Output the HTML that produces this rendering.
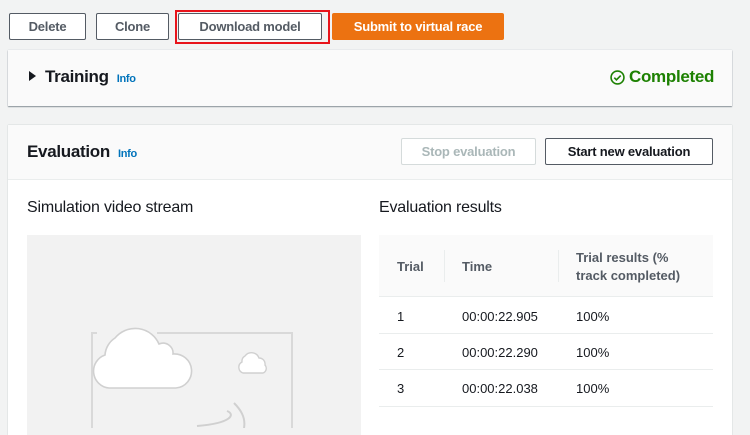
<!DOCTYPE html>
<html><head><meta charset="utf-8"><style>
*{box-sizing:border-box;margin:0;padding:0}
body{width:750px;height:428px;overflow:hidden;background:#f2f3f3;font-family:"Liberation Sans",sans-serif;color:#16191f;position:relative}
.a{position:absolute}
.btn{position:absolute;height:27px;border:1px solid #545b64;background:#fff;border-radius:2px;font-size:13px;font-weight:bold;color:#545b64;display:flex;align-items:center;justify-content:center;letter-spacing:-0.2px}
.info{color:#0073bb;font-size:11px;font-weight:bold;margin-left:8px}
</style></head><body>
<div class="btn" style="left:9px;top:13px;width:77px">Delete</div>
<div class="btn" style="left:96px;top:13px;width:73px">Clone</div>
<div class="a" style="left:175px;top:10px;width:155px;height:34px;border:2px solid #e8141b"></div>
<div class="btn" style="left:178px;top:13px;width:144px">Download model</div>
<div class="btn" style="left:332px;top:13px;width:172px;background:#ec7211;border-color:#ec7211;color:#fff">Submit to virtual race</div>

<div class="a" style="left:8px;top:50px;width:724px;height:56px;background:#fafafa;box-shadow:0 1px 1px #8a9399,0 0 1px #c4c8cc"></div>
<div class="a" style="left:29px;top:71px;width:0;height:0;border-left:7px solid #16191f;border-top:5px solid transparent;border-bottom:5px solid transparent"></div>
<div class="a" style="left:45px;top:67px;font-size:17px;font-weight:bold;letter-spacing:-0.3px">Training<span class="info">Info</span></div>
<div class="a" style="left:610px;top:67px;font-size:17px;font-weight:bold;color:#1d8102;letter-spacing:-0.3px;display:flex;align-items:center">
<svg width="15" height="15" viewBox="0 0 14 14" style="margin-right:4px"><circle cx="7" cy="7" r="6" fill="none" stroke="#1d8102" stroke-width="1.5"/><path d="M4 7.2l2 2 4-4" fill="none" stroke="#1d8102" stroke-width="1.5"/></svg>Completed</div>

<div class="a" style="left:8px;top:125px;width:724px;height:310px;background:#fff;box-shadow:0 0 1px #aab7b8"></div>
<div class="a" style="left:8px;top:125px;width:724px;height:55px;background:#fafafa;border-bottom:1px solid #eaeded"></div>
<div class="a" style="left:27px;top:142px;font-size:17px;font-weight:bold;letter-spacing:-0.3px">Evaluation<span class="info">Info</span></div>
<div class="btn" style="left:401px;top:138px;width:135px;border-color:#d5dbdb;color:#aab7b8">Stop evaluation</div>
<div class="btn" style="left:545px;top:138px;width:168px;color:#16191f;border-color:#545b64">Start new evaluation</div>

<div class="a" style="left:27px;top:199px;font-size:16px;letter-spacing:-0.2px">Simulation video stream</div>
<div class="a" style="left:379px;top:199px;font-size:16px;letter-spacing:-0.2px">Evaluation results</div>
<div class="a" style="left:27px;top:235px;width:334px;height:200px;background:#f2f2f2"></div>
<svg class="a" style="left:27px;top:235px" width="334" height="193" viewBox="0 0 334 193">
<path d="M70 98H65V200M130 98H265V200" fill="none" stroke="#d9d9d9" stroke-width="2"/>
<path d="M82 153a17 17 0 0 1 -4-33a22 22 0 0 1 10-17a26 26 0 0 1 44 6a10 10 0 0 1 14 10a17 17 0 0 1 3 34z" fill="#fff" stroke="#d0d0d0" stroke-width="1.6"/>
<path d="M216 138a6 6 0 0 1 -1-11a6 6 0 0 1 3-6a8 8 0 0 1 14 2a6 6 0 0 1 6 7a5 5 0 0 1-2 8z" fill="#fff" stroke="#d0d0d0" stroke-width="1.4"/>
<path d="M207 168c6 6 12 14 10 25M200 176c8 3 6 12 -30 15" fill="none" stroke="#d0d0d0" stroke-width="2"/>
</svg>
<div class="a" style="left:379px;top:235px;width:334px;height:62px;background:#fafafa;border-bottom:1px solid #eaeded"></div>
<div class="a" style="left:444px;top:250px;width:1px;height:32px;background:#eaeded"></div>
<div class="a" style="left:558px;top:250px;width:1px;height:32px;background:#eaeded"></div>
<div class="a" style="left:397px;top:259px;font-size:13px;font-weight:bold;color:#545b64">Trial</div>
<div class="a" style="left:462px;top:259px;font-size:13px;font-weight:bold;color:#545b64">Time</div>
<div class="a" style="left:576px;top:249px;font-size:13px;font-weight:bold;color:#545b64;line-height:18px">Trial results (%<br>track completed)</div>
<div class="a" style="left:379px;top:333px;width:334px;height:1px;background:#eaeded"></div>
<div class="a" style="left:379px;top:369px;width:334px;height:1px;background:#eaeded"></div>
<div class="a" style="left:379px;top:406px;width:334px;height:1px;background:#eaeded"></div>
<div class="a" style="left:397px;top:309px;font-size:13px">1</div><div class="a" style="left:462px;top:309px;font-size:13px">00:00:22.905</div><div class="a" style="left:576px;top:309px;font-size:13px">100%</div>
<div class="a" style="left:397px;top:345px;font-size:13px">2</div><div class="a" style="left:462px;top:345px;font-size:13px">00:00:22.290</div><div class="a" style="left:576px;top:345px;font-size:13px">100%</div>
<div class="a" style="left:397px;top:381px;font-size:13px">3</div><div class="a" style="left:462px;top:381px;font-size:13px">00:00:22.038</div><div class="a" style="left:576px;top:381px;font-size:13px">100%</div>
</body></html>
